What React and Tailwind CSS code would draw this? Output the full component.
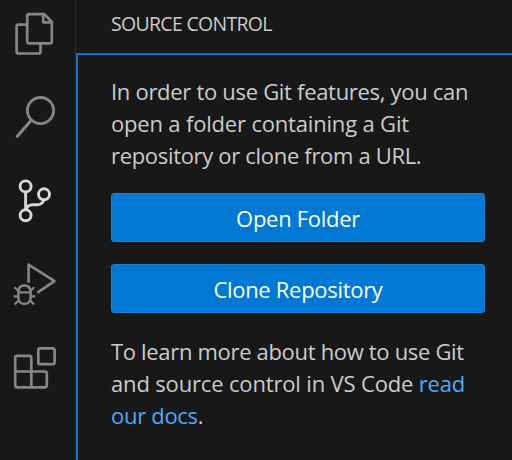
import React from "react";

function FilesIcon() {
  return (
    <svg width="76" height="76" viewBox="0 0 76 76" fill="none" stroke="currentColor" strokeWidth="2.7" strokeLinejoin="round">
      <path d="M29 14.2H44.2L51.8 21.8V41.3Q51.8 43.3 49.8 43.3H29.2Q27.2 43.3 27.2 41.3V16.2Q27.2 14.2 29 14.2Z" />
      <path d="M43.2 14V22.3H52" />
      <path d="M27 24.7H18.6Q16.6 24.7 16.6 26.7V51.5Q16.6 53.5 18.6 53.5H38.5Q40.5 53.5 40.5 51.5V43.5" />
    </svg>
  );
}

function SearchIcon() {
  return (
    <svg width="76" height="84" viewBox="0 76 76 84" fill="none" stroke="currentColor" strokeWidth="2.8" strokeLinecap="round">
      <circle cx="40.5" cy="110.6" r="13.1" />
      <path d="M31 120.6L17.3 136.3" strokeWidth="3.1" />
    </svg>
  );
}

function BranchIcon() {
  return (
    <svg width="76" height="84" viewBox="0 160 76 84" fill="none" stroke="currentColor" strokeWidth="2.9">
      <circle cx="25.6" cy="186.4" r="5.5" />
      <circle cx="44" cy="194.3" r="5.5" />
      <circle cx="25.6" cy="215.3" r="5.5" />
      <path d="M25.6 192V210M44 200C42.5 203.2 40.5 204.7 37.5 204.7H32.5C29 204.7 26.8 206.6 25.8 210" />
    </svg>
  );
}

function DebugIcon() {
  return (
    <svg width="76" height="84" viewBox="0 244 76 84" fill="none" stroke="currentColor" strokeWidth="2.6" strokeLinejoin="round">
      <path d="M28.6 282.7V264.6L54.5 281.1L37.4 292.6" />
      <path d="M18.4 292.5C18.4 287.8 20.8 285.4 24.4 285.4S30.6 287.8 30.6 292.5V297.5C30.6 301.5 28 304 24.4 304S18.4 301.5 18.4 297.5Z" strokeWidth="2.5" />
      <path d="M18.2 292.4H30.6M18.4 291L14.6 287.3M30.4 291L34.2 287.3M18.2 296.3H13.6M30.6 296.3H35.2M18.8 300.2L14.6 304.5M30 300.2L34.2 304.5" strokeWidth="2.3" />
    </svg>
  );
}

function ExtensionsIcon() {
  return (
    <svg width="76" height="84" viewBox="0 328 76 84" fill="none" stroke="currentColor" strokeWidth="2.7">
      <path d="M17.2 355.8H29.3Q31.3 355.8 31.3 357.8V371.5H44.8Q46.8 371.5 46.8 373.5V385.3Q46.8 387.3 44.8 387.3H17.2Q15.2 387.3 15.2 385.3V357.8Q15.2 355.8 17.2 355.8Z" />
      <path d="M15 371.5H31.3V387.3" />
      <rect x="38.3" y="348.4" width="16.3" height="15.8" rx="2" />
    </svg>
  );
}

function Button({ children }) {
  return (
    <button className="flex h-[49px] w-[374px] items-center justify-center rounded-[3px] border border-[#1780da] bg-[#0078d4] pt-px text-[22px] leading-[32px] text-white">
      {children}
    </button>
  );
}

export default function App() {
  return (
    <div className="flex h-[460px] w-[512px] overflow-hidden bg-[#181818] font-['Open_Sans','Noto_Sans',sans-serif] text-[#cccccc]">
      <nav className="flex w-[76px] shrink-0 flex-col border-r border-[#2b2b2b] text-[#868686]">
        <FilesIcon />
        <SearchIcon />
        <div className="text-[#d7d7d7]"><BranchIcon /></div>
        <DebugIcon />
        <ExtensionsIcon />
      </nav>
      <main className="flex flex-1 flex-col">
        <header className="flex h-[53px] shrink-0 items-center pl-[35px] pb-[6px] text-[19.5px]">
          <h1 className="whitespace-nowrap tracking-[-0.7px]">SOURCE CONTROL</h1>
        </header>
        <section className="flex flex-1 flex-col border-t-2 border-l-2 border-[#0b70cc] pl-[33px] pt-[20px] text-[22px] leading-[32px] whitespace-nowrap">
          <p className="h-[96px]">
            <span className="block tracking-[-0.3px]">In order to use Git features, you can</span>
            <span className="block tracking-[-0.18px]">open a folder containing a Git</span>
            <span className="block tracking-[-0.32px]">repository or clone from a URL.</span>
          </p>
          <div className="mt-[22px] flex flex-col gap-[22px]">
            <Button><span className="tracking-[-0.3px]">Open Folder</span></Button>
            <Button><span className="tracking-[-0.3px]">Clone Repository</span></Button>
          </div>
          <p className="mt-[22px]">
            <span className="block tracking-[-0.32px]">To learn more about how to use Git</span>
            <span className="block tracking-[-0.16px]">and source control in VS Code <a className="text-[#4daafc]">read</a></span>
            <span className="block tracking-[-0.3px]"><a className="text-[#4daafc]">our docs</a>.</span>
          </p>
        </section>
      </main>
    </div>
  );
}
